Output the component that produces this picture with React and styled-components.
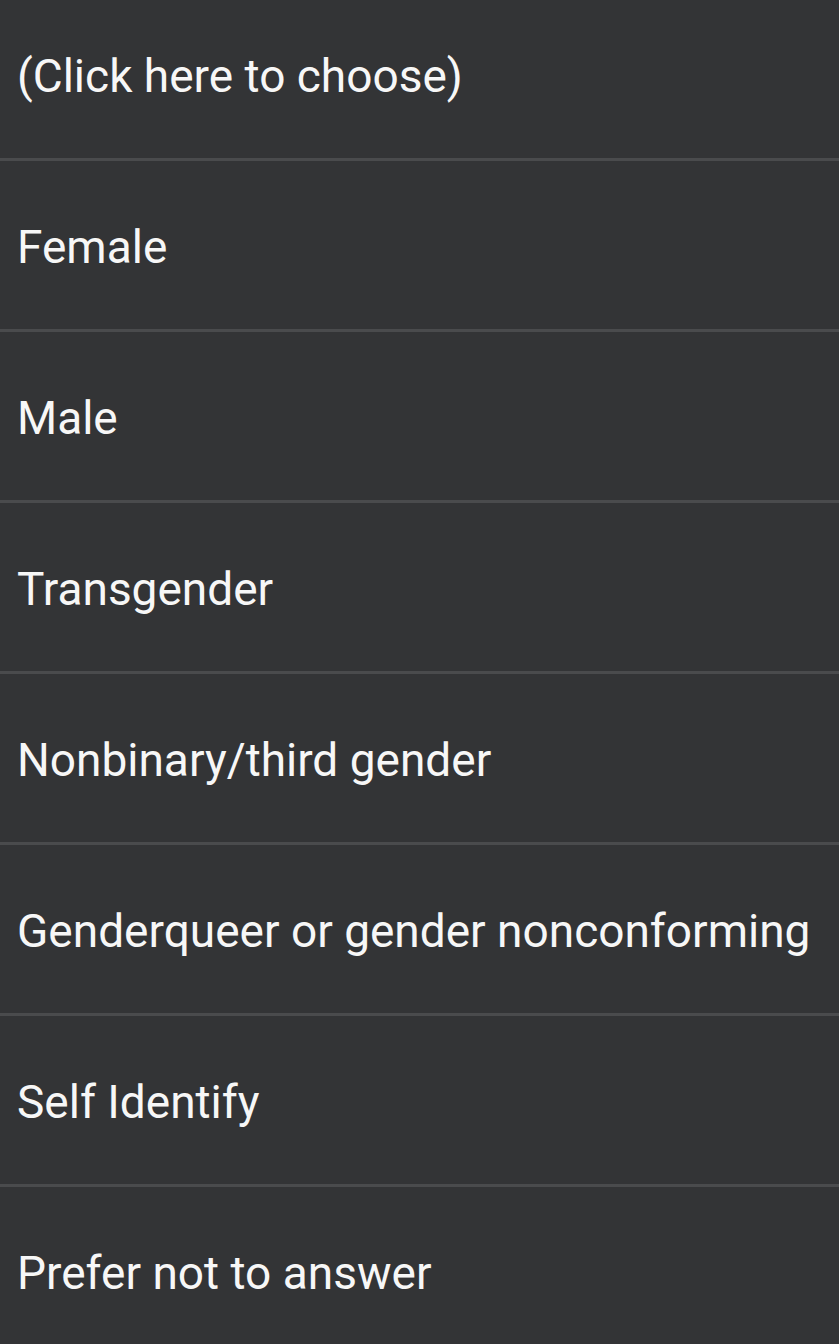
import React from "react";
import styled, { createGlobalStyle } from "styled-components";

const GlobalStyle = createGlobalStyle`
  html, body {
    margin: 0;
    padding: 0;
    background-color: #333436;
    overflow: hidden;
  }
`;

const options = [
  "(Click here to choose)",
  "Female",
  "Male",
  "Transgender",
  "Nonbinary/third gender",
  "Genderqueer or gender nonconforming",
  "Self Identify",
  "Prefer not to answer",
];

export default function App() {
  return (
    <>
      <GlobalStyle />
      <List>
        {options.map((label) => (
          <Option key={label}>{label}</Option>
        ))}
      </List>
    </>
  );
}

const List = styled.ul`
  list-style: none;
  margin: -10px 0 0 0;
  padding: 0;
  background-color: #333436;
  height: 1354px;
  overflow: hidden;
`;

const Option = styled.li`
  display: flex;
  align-items: center;
  box-sizing: border-box;
  height: 171px;
  padding: 3px 0 0 17px;
  border-bottom: 3px solid #4a4b4d;
  font-family: Roboto, "Noto Sans", sans-serif;
  font-size: 46px;
  color: #f7f7f7;
  white-space: nowrap;
`;
